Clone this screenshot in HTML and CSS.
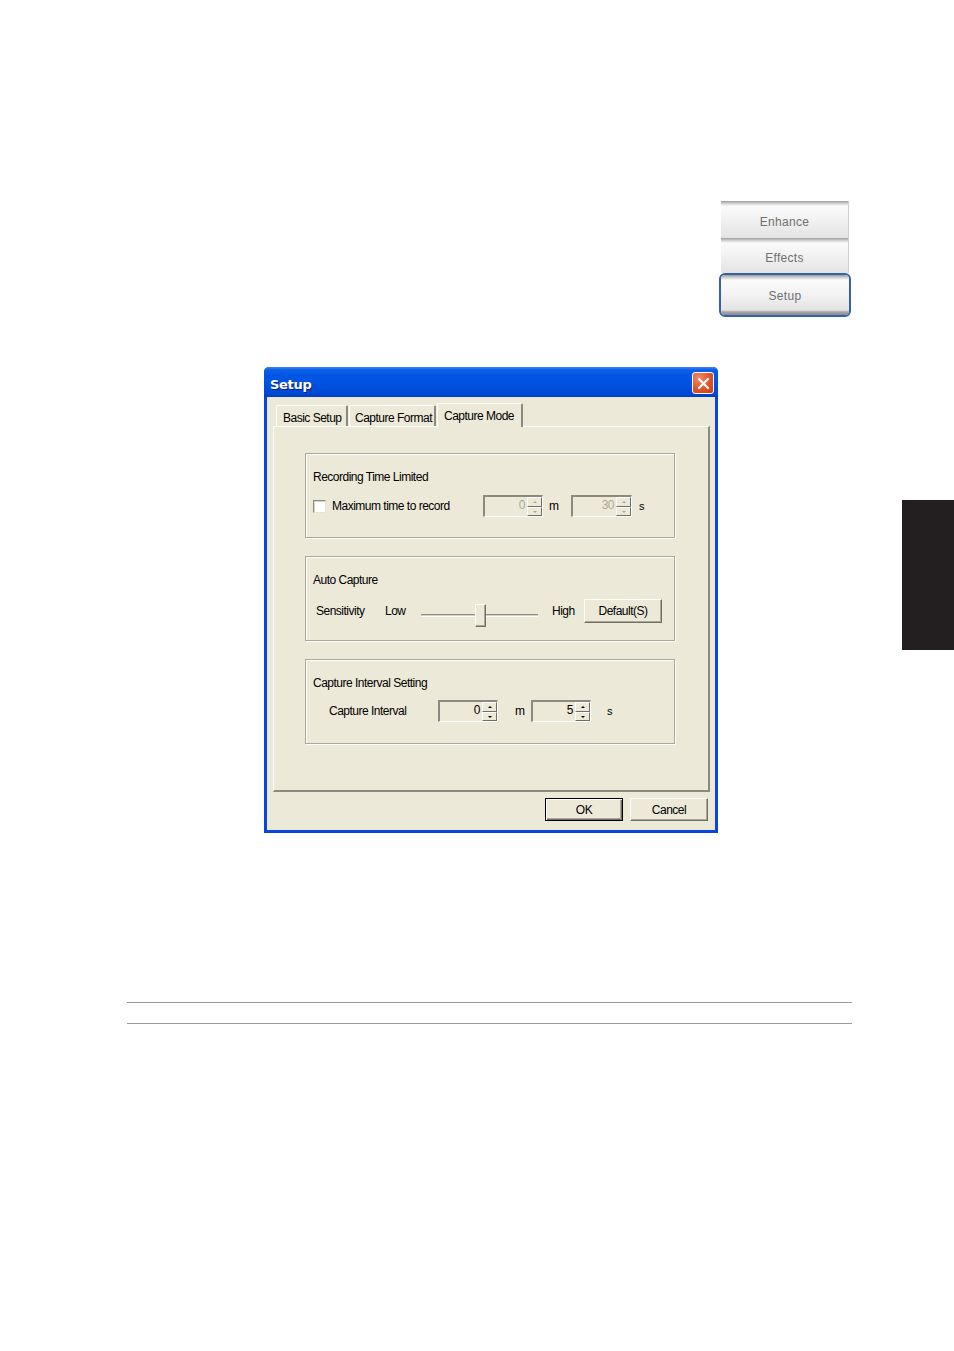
FILE: index.html
```html
<!DOCTYPE html>
<html>
<head>
<meta charset="utf-8">
<link rel="stylesheet" href="styles.css">
</head>
<body>
<div class="page">
  <div class="nav">
    <div class="navbtn nb1">Enhance</div>
    <div class="navbtn nb2">Effects</div>
    <div class="navsel"><div class="navbtn nb3">Setup</div></div>
  </div>

  <div class="dialog">
    <div class="titlebar">
      <span class="title">Setup</span>
      <span class="close"><svg width="13" height="13" viewBox="0 0 13 13"><path d="M2 2 L11 11 M11 2 L2 11" stroke="#fff" stroke-width="2.2" stroke-linecap="round"/></svg></span>
    </div>
    <div class="body">
      <div class="tabs">
        <div class="tab t1">Basic Setup</div>
        <div class="tab t2">Capture Format</div>
        <div class="tab t3 sel">Capture Mode</div>
      </div>
      <div class="panel">
        <div class="group g1">
          <div class="gtitle">Recording Time Limited</div>
          <div class="grow">
            <span class="check"></span>
            <span class="lbl w-max">Maximum time to record</span>
            <span class="spin dis w60"><span class="field">0</span><span class="arrows"><span class="ab up"></span><span class="ab dn"></span></span></span>
            <span class="lbl w-m1">m</span>
            <span class="spin dis w61"><span class="field">30</span><span class="arrows"><span class="ab up"></span><span class="ab dn"></span></span></span>
            <span class="lbl s1">s</span>
          </div>
        </div>
        <div class="group g2">
          <div class="gtitle">Auto Capture</div>
          <div class="grow">
            <span class="lbl w-sens">Sensitivity</span>
            <span class="lbl w-low">Low</span>
            <span class="slider"><span class="track"></span><span class="thumb"></span></span>
            <span class="lbl w-high">High</span>
            <span class="btn w78">Default(S)</span>
          </div>
        </div>
        <div class="group g3">
          <div class="gtitle">Capture Interval Setting</div>
          <div class="grow">
            <span class="lbl w-ci">Capture Interval</span>
            <span class="spin w60"><span class="field">0</span><span class="arrows"><span class="ab up"></span><span class="ab dn"></span></span></span>
            <span class="lbl w-m3">m</span>
            <span class="spin w60"><span class="field">5</span><span class="arrows"><span class="ab up"></span><span class="ab dn"></span></span></span>
            <span class="lbl s3">s</span>
          </div>
        </div>
      </div>
      <div class="footer">
        <span class="btn w78 def">OK</span>
        <span class="btn w78">Cancel</span>
      </div>
    </div>
  </div>

  <div class="rules">
    <div class="rule"></div>
    <div class="rule r2"></div>
  </div>

  <div class="sidetab"></div>
</div>
</body>
</html>
```

FILE: styles.css
```css
html, body { margin: 0; padding: 0; background: #fff; }
.page { position: relative; width: 954px; height: 1351px; overflow: hidden; font-family: "Liberation Sans", Arial, sans-serif; }

/* nav stack */
.nav { margin: 201px 0 0 721px; width: 128px; display: flex; flex-direction: column; }
.navbtn {
  box-sizing: border-box; width: 128px; display: flex; align-items: center; justify-content: center;
  font-size: 12px; color: #707070; letter-spacing: 0.3px;
  background: linear-gradient(to bottom, #9a9a9a 0, #c8c8c8 2px, #d9d9d9 3px, #fbfbfb 5px, #f2f2f2 50%, #e3e3e3 100%);
  border-right: 1px solid #cfcfcf;
}
.nb1 { height: 37px; padding-top: 4px; }
.nb2 { height: 35px; padding-top: 5px; }
.navsel { box-sizing: border-box; width: 132px; height: 44px; margin-left: -2px; border: 2px solid #3461a9; border-radius: 6px; overflow: hidden; }
.nb3 { width: 128px; height: 40px; padding-top: 2px; border-right: none;
  background: linear-gradient(to bottom, #9a9a9a 0, #c8c8c8 2px, #d9d9d9 3px, #fbfbfb 5px, #f2f2f2 50%, #e3e3e3 88%, #a8a8a8 92%, #8a8a8a 100%); }

/* dialog */
.dialog { box-sizing: border-box; width: 454px; height: 466px; margin: 50px 0 0 264px; background: #0a46d8; border-radius: 5px 5px 0 0; display: flex; flex-direction: column; }
.titlebar { height: 30px; flex: none; display: flex; align-items: center; justify-content: space-between; padding: 0 4px 0 6px;
  background: linear-gradient(to bottom, #3b86f5 0, #0a5fe8 3px, #0356e4 8px, #0153e2 50%, #0049d6 85%, #003fc6 100%); border-radius: 5px 5px 0 0; }
.title { color: #fff; font-family: "DejaVu Sans", sans-serif; font-weight: bold; font-size: 13px; text-shadow: 1px 1px #0a1f7a; margin-top: 4px; letter-spacing: -0.3px; }
.close { box-sizing: border-box; width: 22px; height: 22px; border: 1px solid #fff; border-radius: 3px; display: flex; align-items: center; justify-content: center; margin-top: 2px;
  background: radial-gradient(circle at 30% 25%, #f08a6a 0, #e0532a 55%, #c53e1a 100%); }
.body { flex: 1; margin: 0 3px 3px 3px; background: #ece9d8; display: flex; flex-direction: column; position: relative; }

.tabs { display: flex; align-items: flex-end; height: 29px; padding-left: 9px; box-sizing: border-box; }
.tab { box-sizing: border-box; height: 21px; font-size: 12px; color: #000; padding: 5px 0 0 6px; white-space: nowrap; border-left: 1px solid #fff; border-top: 1px solid #fff; border-right: 2px solid #8c8a80; border-radius: 2px 2px 0 0; letter-spacing: -0.5px; margin-right: 1px; }
.t1 { width: 72px; }
.t2 { width: 87px; padding-left: 5px; }
.t3 { width: 86px; height: 24px; padding-top: 5px; background: #ece9d8; position: relative; z-index: 2; margin-bottom: -1px; }

.panel { box-sizing: border-box; width: 437px; height: 366px; margin-left: 6px; border-top: 1px solid #fff; border-left: 1px solid #fff; border-right: 2px solid #8c8a80; border-bottom: 2px solid #8c8a80; padding: 26px 0 0 31px; display: flex; flex-direction: column; gap: 18px; }
.group { box-sizing: border-box; width: 370px; height: 85px; border: 1px solid #aca899; box-shadow: inset 1px 1px #fff, 1px 1px #fff; padding: 16px 0 0 7px; }
.g2 { padding-top: 16px; }
.gtitle { font-size: 12px; line-height: 14px; color: #000; letter-spacing: -0.5px; }
.grow { display: flex; align-items: center; height: 22px; margin-top: 12px; font-size: 12px; letter-spacing: -0.5px; color: #000; }
.g1 .grow { margin-top: 11px; }
.g2 .grow { height: 24px; margin-top: 12px; }
.g3 .grow { margin-top: 10px; }

.lbl { display: inline-block; white-space: nowrap; }
.check { box-sizing: border-box; width: 13px; height: 13px; background: #fff; border-top: 1px solid #8c8a80; border-left: 1px solid #8c8a80; border-right: 1px solid #e5e3d6; border-bottom: 1px solid #e5e3d6; box-shadow: inset 1px 1px #d8d5c4; margin-right: 6px; }
.w-max { width: 151px; }
.w-m1 { padding-left: 6px; box-sizing: border-box; width: 28px; }
.s1 { margin-left: 7px; font-size: 11px; }

.spin { box-sizing: border-box; height: 22px; display: flex; border-top: 2px solid #8c8a80; border-left: 2px solid #8c8a80; border-right: 1px solid #fff; border-bottom: 1px solid #fff; background: #ece9d8; }
.w60 { width: 60px; }
.w61 { width: 61px; }
.field { flex: 1; text-align: right; font-size: 12px; padding: 0 2px 0 0; line-height: 16px; }
.dis .field { color: #aca899; }
.arrows { width: 15px; display: flex; flex-direction: column; }
.ab { flex: 1; box-sizing: border-box; border-top: 1px solid #fff; border-left: 1px solid #fff; border-right: 1px solid #716f64; border-bottom: 1px solid #716f64; position: relative; background: #ece9d8; }
.ab::after { content: ""; position: absolute; left: 5px; top: 3px; border-left: 2px solid transparent; border-right: 2px solid transparent; }
.up::after { border-bottom: 2px solid #000; }
.dn::after { border-top: 2px solid #000; }
.dis .up::after { border-bottom-color: #aca899; }
.dis .dn::after { border-top-color: #aca899; }

.w-sens { width: 69px; margin-left: 3px; }
.w-low { width: 36px; }
.slider { width: 117px; height: 23px; position: relative; align-self: flex-start; margin-top: 5px; }
.track { position: absolute; left: 0; right: 0; top: 10px; height: 3px; border-top: 1px solid #8c8a80; border-bottom: 1px solid #fff; background: #d6d3c4; box-sizing: border-box; }
.thumb { position: absolute; left: 54px; top: 0; width: 11px; height: 23px; box-sizing: border-box; background: #ece9d8; border-top: 1px solid #fff; border-left: 1px solid #fff; border-right: 1px solid #716f64; border-bottom: 1px solid #716f64; box-shadow: inset -1px -1px #aca899; }
.w-high { width: 32px; margin-left: 14px; }
.btn { box-sizing: border-box; height: 24px; display: inline-flex; align-items: center; justify-content: center; font-size: 12px; letter-spacing: -0.5px; border-top: 1px solid #fff; border-left: 1px solid #fff; border-right: 1px solid #716f64; border-bottom: 1px solid #716f64; box-shadow: inset -1px -1px #aca899; background: #ece9d8; }
.w78 { width: 78px; }
.def { border: 1px solid #000; box-shadow: inset 1px 1px #fff, inset -1px -1px #716f64, inset -2px -2px #aca899; }

.w-ci { width: 109px; margin-left: 16px; }
.w-m3 { width: 33px; padding-left: 17px; box-sizing: border-box; }
.s3 { margin-left: 16px; font-size: 11px; }

.footer { display: flex; gap: 7px; padding: 6px 0 0 278px; }
.footer .btn { height: 23px; }

/* rules */
.rules { margin: 169px 0 0 127px; width: 725px; }
.rule { height: 1px; background: #999; }
.r2 { margin-top: 20px; }

.sidetab { position: absolute; left: 902px; top: 500px; width: 52px; height: 150px; background: #231f20; }
```
